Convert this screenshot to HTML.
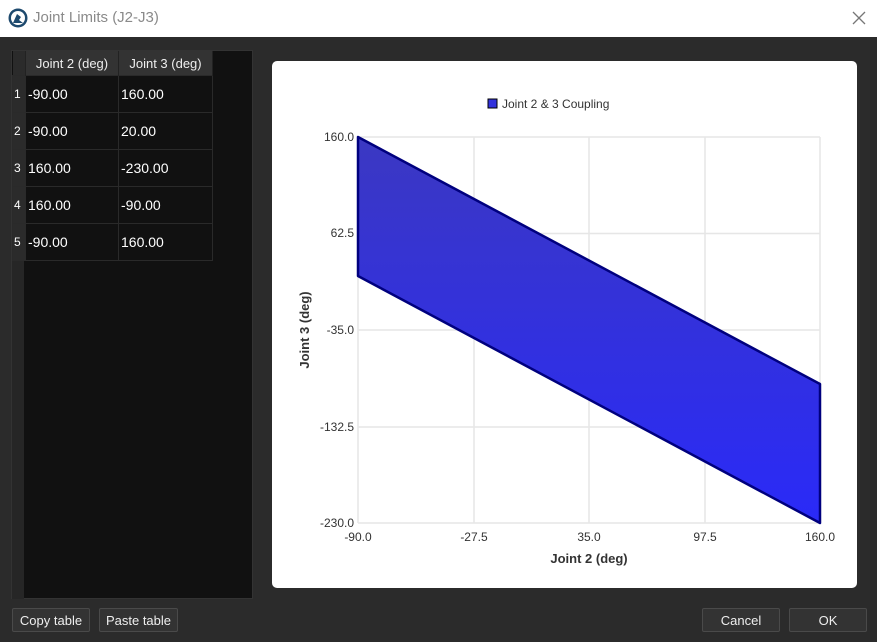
<!DOCTYPE html>
<html><head><style>
body{margin:0;width:877px;height:642px;background:#2b2b2b;font-family:"Liberation Sans",sans-serif;overflow:hidden;position:relative}
.title{position:absolute;left:0;top:0;width:877px;height:37px;background:#fff}
.title .t{position:absolute;left:33px;top:9px;font-size:15px;color:#8a8a8a}
.panel{position:absolute;left:11px;top:50px;width:242px;height:549px;background:#111;border:1px solid #333;box-sizing:border-box}
.rn{position:absolute;left:0;top:24px;width:12px;height:524px;background:#262626}
table{position:absolute;left:0;top:0;border-collapse:collapse;font-size:14px;color:#fff;table-layout:fixed}
th{height:24px;background:#333;color:#eee;font-weight:normal;font-size:13px;border-right:1px solid #222;padding:0}
td{height:36px;border:1px solid #2a2a2a;padding:0 0 0 2px;overflow:hidden}
td.n{background:#2b2b2b;font-size:12px;padding:0 0 0 1px}
.btn{position:absolute;top:608px;height:24px;background:#333;border:1px solid #4a4a4a;border-radius:2px;color:#eee;font-size:13px;text-align:center;line-height:24px;box-sizing:border-box}
.chart{position:absolute;left:272px;top:61px;width:585px;height:527px;background:#fff;border-radius:5px}
</style></head><body>
<div class="title">
<svg style="position:absolute;left:8px;top:8px" width="20" height="20"><circle cx="10" cy="10" r="9.5" fill="#1e4a6e"/><circle cx="10" cy="10" r="7" fill="#fff"/><path d="M5 15 L9 6 L13 9 L11 12 L15 15 Z" fill="#1e4a6e"/></svg>
<div class="t">Joint Limits (J2-J3)</div>
<svg style="position:absolute;left:852px;top:11px" width="14" height="14"><path d="M1 1L13 13M13 1L1 13" stroke="#777" stroke-width="1.3"/></svg></div>
<div class="panel"><div class="rn"></div>
<table>
<colgroup><col style="width:13px"><col style="width:93px"><col style="width:94px"></colgroup>
<tr><th style="background:#2b2b2b"></th><th>Joint 2 (deg)</th><th>Joint 3 (deg)</th></tr>
<tr><td class="n">1</td><td>-90.00</td><td>160.00</td></tr>
<tr><td class="n">2</td><td>-90.00</td><td>20.00</td></tr>
<tr><td class="n">3</td><td>160.00</td><td>-230.00</td></tr>
<tr><td class="n">4</td><td>160.00</td><td>-90.00</td></tr>
<tr><td class="n">5</td><td>-90.00</td><td>160.00</td></tr>
</table></div>
<div class="btn" style="left:12px;width:78px">Copy table</div>
<div class="btn" style="left:99px;width:79px">Paste table</div>
<div class="btn" style="left:702px;width:78px">Cancel</div>
<div class="btn" style="left:789px;width:78px">OK</div>
<div class="chart"></div>
<svg style="position:absolute;left:0;top:0" width="877" height="642" font-family="Liberation Sans,sans-serif" font-size="12" fill="#333">
<defs><linearGradient id="g" x1="0" y1="0" x2="0" y2="1"><stop offset="0" stop-color="#3b38c2"/><stop offset="1" stop-color="#2a2af8"/></linearGradient></defs>
<g stroke="#e6e6e6" stroke-width="1.5">
<line x1="358" y1="137" x2="820" y2="137"/><line x1="358" y1="233.5" x2="820" y2="233.5"/><line x1="358" y1="330" x2="820" y2="330"/><line x1="358" y1="427" x2="820" y2="427"/><line x1="358" y1="523" x2="820" y2="523"/>
<line x1="358" y1="137" x2="358" y2="523"/><line x1="474" y1="137" x2="474" y2="523"/><line x1="589" y1="137" x2="589" y2="523"/><line x1="705" y1="137" x2="705" y2="523"/><line x1="820" y1="137" x2="820" y2="523"/>
</g>
<polygon points="358,137 358,276 820,523 820,384" fill="url(#g)" stroke="#00007e" stroke-width="2.5" stroke-linejoin="round"/>
<g text-anchor="end"><text x="354" y="141">160.0</text><text x="354" y="237">62.5</text><text x="354" y="334">-35.0</text><text x="354" y="431">-132.5</text><text x="354" y="527">-230.0</text></g>
<g text-anchor="middle"><text x="358" y="541">-90.0</text><text x="474" y="541">-27.5</text><text x="589" y="541">35.0</text><text x="705" y="541">97.5</text><text x="820" y="541">160.0</text>
<text x="589" y="563" font-weight="bold" font-size="13">Joint 2 (deg)</text>
<text transform="translate(309,330) rotate(-90)" font-weight="bold" font-size="13">Joint 3 (deg)</text></g>
<rect x="488" y="99" width="9" height="9" fill="#3333dd" stroke="#000" stroke-width="1"/>
<text x="502" y="108">Joint 2 &amp; 3 Coupling</text>
</svg>
</body></html>
